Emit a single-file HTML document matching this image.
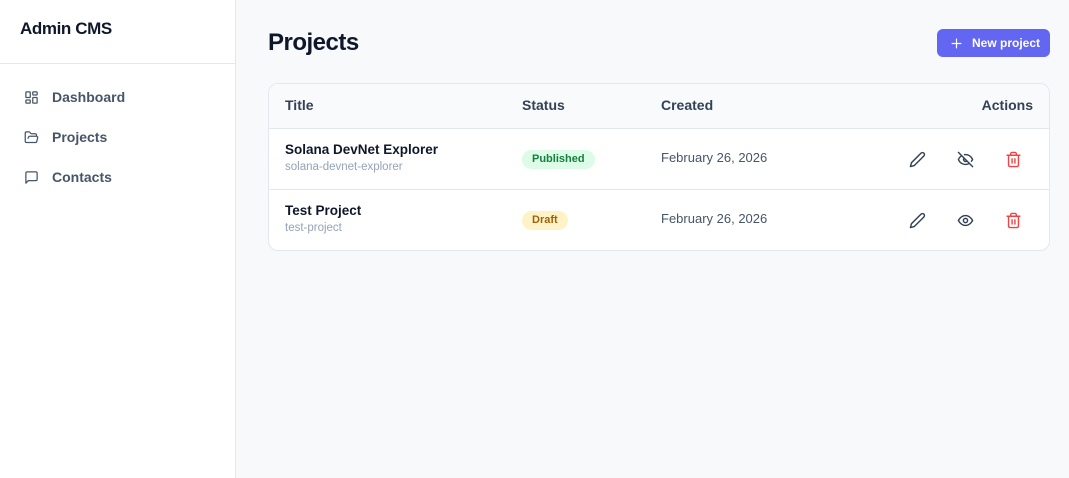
<!DOCTYPE html>
<html><head><style>
*{box-sizing:border-box;margin:0;padding:0}
body{width:1069px;height:478px;overflow:hidden;font-family:"Liberation Sans",sans-serif;background:#f8f9fb;position:relative;color:#0f172a}
.side{position:absolute;left:0;top:0;width:236px;height:478px;background:#fff;border-right:1px solid #e2e8f0}
.brand{height:64px;border-bottom:1px solid #e2e8f0;padding:19px 20px;font-weight:bold;font-size:17px;letter-spacing:-0.4px}
.nav{position:absolute;left:24px;font-size:14px;font-weight:bold;color:#475569;display:flex;align-items:center}
.nav svg{margin-right:13px}
h1{position:absolute;left:268px;top:29px;font-size:24px;font-weight:bold;letter-spacing:-0.5px}
.btn{position:absolute;left:937px;top:29px;width:113px;height:28px;background:#6366f1;border-radius:6px;color:#fff;font-size:12px;font-weight:bold;display:flex;align-items:center;padding-left:13px}
.btn svg{margin-right:9px}
.card{position:absolute;left:268px;top:83px;width:782px;height:168px;background:#fff;border:1px solid #e2e8f0;border-radius:10px;overflow:hidden}
.hd{height:45px;background:#f8fafc;border-bottom:1px solid #e2e8f0;position:relative}
.row{height:61px;position:relative;border-bottom:1px solid #e2e8f0}
.row:last-child{border-bottom:none}
.t{position:absolute;font-size:13.5px}
.th{font-weight:bold;color:#334155;top:13px;font-size:14px}
.badge{position:absolute;left:253px;top:21px;height:19px;border-radius:10px;font-size:11px;font-weight:bold;padding:3px 10px}
.ic{position:absolute;top:22px}
</style></head><body>
<div class="side">
<div class="brand">Admin CMS</div>
<div class="nav" style="top:89px"><svg width="15" height="15" viewBox="0 0 24 24" fill="none" stroke="#475569" stroke-width="2"><rect x="3" y="3" width="7" height="9" rx="1"/><rect x="14" y="3" width="7" height="5" rx="1"/><rect x="14" y="12" width="7" height="9" rx="1"/><rect x="3" y="16" width="7" height="5" rx="1"/></svg>Dashboard</div>
<div class="nav" style="top:129px"><svg width="15" height="15" viewBox="0 0 24 24" fill="none" stroke="#475569" stroke-width="2" stroke-linejoin="round"><path d="M6 14l1.5-2.9A2 2 0 0 1 9.2 10H20a2 2 0 0 1 1.9 2.5l-1.5 6A2 2 0 0 1 18.5 20H4a2 2 0 0 1-2-2V5a2 2 0 0 1 2-2h3.9a2 2 0 0 1 1.7.9l.8 1.2a2 2 0 0 0 1.7.9H18a2 2 0 0 1 2 2v2"/></svg>Projects</div>
<div class="nav" style="top:169px"><svg width="15" height="15" viewBox="0 0 24 24" fill="none" stroke="#475569" stroke-width="2" stroke-linejoin="round"><path d="M21 15a2 2 0 0 1-2 2H7l-4 4V5a2 2 0 0 1 2-2h14a2 2 0 0 1 2 2z"/></svg>Contacts</div>
</div>
<h1>Projects</h1>
<div class="btn"><svg width="13" height="13" viewBox="0 0 24 24" stroke="#fff" stroke-width="2.2"><path d="M12 3v18M3 12h18"/></svg>New project</div>
<div class="card">
<div class="hd"><span class="t th" style="left:16px">Title</span><span class="t th" style="left:253px">Status</span><span class="t th" style="left:392px">Created</span><span class="t th" style="right:16px">Actions</span></div>
<div class="row">
<span class="t" style="left:16px;top:13px;font-weight:bold;font-size:13.5px">Solana DevNet Explorer</span>
<span class="t" style="left:16px;top:32px;font-size:11.5px;color:#94a3b8">solana-devnet-explorer</span>
<span class="badge" style="background:#dcfce7;color:#15803d">Published</span>
<span class="t" style="left:392px;top:21px;color:#475569;font-size:13px">February 26, 2026</span>
<svg class="ic" style="left:640px" width="17" height="17" viewBox="0 0 24 24" fill="none" stroke="#334155" stroke-width="2" stroke-linejoin="round"><path d="M17 3a2.8 2.8 0 0 1 4 4L7.5 20.5 2 22l1.5-5.5z"/></svg>
<svg class="ic" style="left:688px" width="17" height="17" viewBox="0 0 24 24" fill="none" stroke="#334155" stroke-width="2" stroke-linecap="round"><path d="M10.7 5.1A10.7 10.7 0 0 1 22 12a13 13 0 0 1-1.7 2.4M14.1 14.2a3 3 0 0 1-4.2-4.2M17.5 17.5A10.8 10.8 0 0 1 2 12a13 13 0 0 1 4.4-5.4M2 2l20 20"/></svg>
<svg class="ic" style="left:736px" width="17" height="17" viewBox="0 0 24 24" fill="none" stroke="#ef4444" stroke-width="2" stroke-linecap="round"><path d="M3 6h18M19 6v14a2 2 0 0 1-2 2H7a2 2 0 0 1-2-2V6M8 6V4a2 2 0 0 1 2-2h4a2 2 0 0 1 2 2v2M10 11v6M14 11v6"/></svg>
</div>
<div class="row">
<span class="t" style="left:16px;top:13px;font-weight:bold;font-size:13.5px">Test Project</span>
<span class="t" style="left:16px;top:32px;font-size:11.5px;color:#94a3b8">test-project</span>
<span class="badge" style="background:#fef3c7;color:#a16207">Draft</span>
<span class="t" style="left:392px;top:21px;color:#475569;font-size:13px">February 26, 2026</span>
<svg class="ic" style="left:640px" width="17" height="17" viewBox="0 0 24 24" fill="none" stroke="#334155" stroke-width="2" stroke-linejoin="round"><path d="M17 3a2.8 2.8 0 0 1 4 4L7.5 20.5 2 22l1.5-5.5z"/></svg>
<svg class="ic" style="left:688px" width="17" height="17" viewBox="0 0 24 24" fill="none" stroke="#334155" stroke-width="2"><path d="M2 12s3.5-7 10-7 10 7 10 7-3.5 7-10 7S2 12 2 12z"/><circle cx="12" cy="12" r="3"/></svg>
<svg class="ic" style="left:736px" width="17" height="17" viewBox="0 0 24 24" fill="none" stroke="#ef4444" stroke-width="2" stroke-linecap="round"><path d="M3 6h18M19 6v14a2 2 0 0 1-2 2H7a2 2 0 0 1-2-2V6M8 6V4a2 2 0 0 1 2-2h4a2 2 0 0 1 2 2v2M10 11v6M14 11v6"/></svg>
</div>
</div>
</body></html>
